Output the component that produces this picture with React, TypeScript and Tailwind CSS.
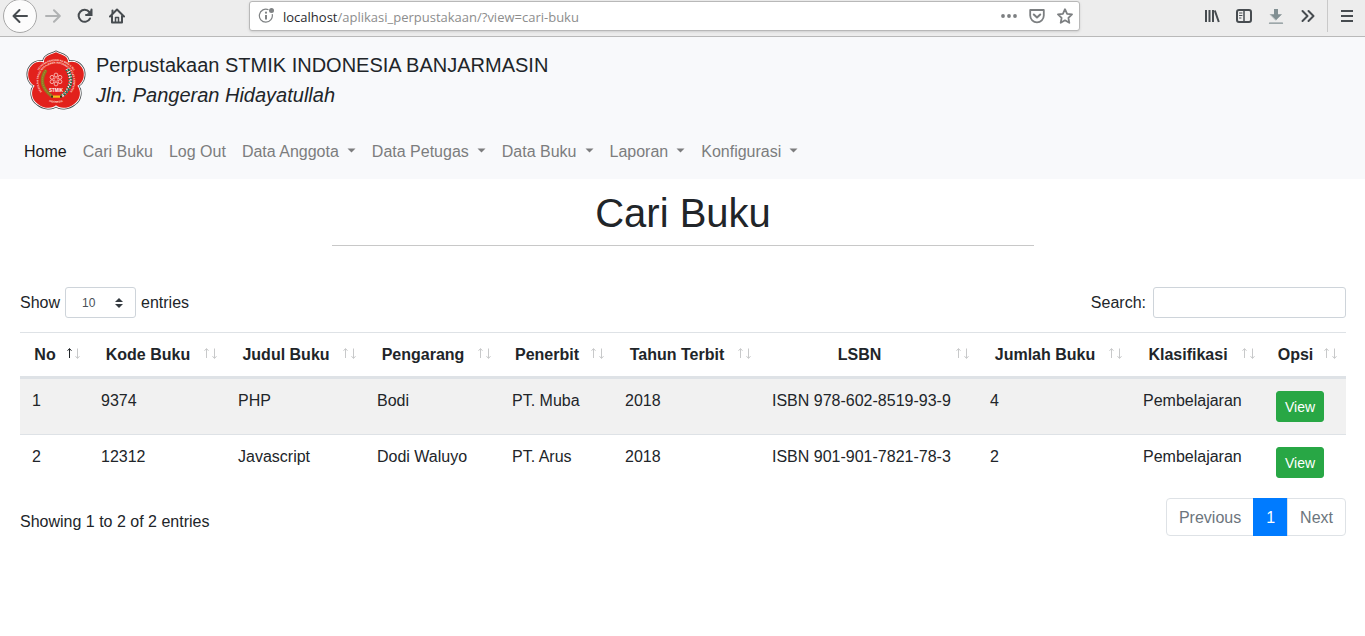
import React from 'react';

type SortState = 'asc' | 'none';

interface Column {
  title: string;
  width: string;
  sort: SortState;
}

interface Book {
  no: number;
  kode: string;
  judul: string;
  pengarang: string;
  penerbit: string;
  tahun: string;
  isbn: string;
  jumlah: number;
  klasifikasi: string;
}

const columns: Column[] = [
  { title: 'No', width: 'w-[69px]', sort: 'asc' },
  { title: 'Kode Buku', width: 'w-[137px]', sort: 'none' },
  { title: 'Judul Buku', width: 'w-[139px]', sort: 'none' },
  { title: 'Pengarang', width: 'w-[135px]', sort: 'none' },
  { title: 'Penerbit', width: 'w-[113px]', sort: 'none' },
  { title: 'Tahun Terbit', width: 'w-[147px]', sort: 'none' },
  { title: 'LSBN', width: 'w-[218px]', sort: 'none' },
  { title: 'Jumlah Buku', width: 'w-[153px]', sort: 'none' },
  { title: 'Klasifikasi', width: 'w-[133px]', sort: 'none' },
  { title: 'Opsi', width: 'w-[82px]', sort: 'none' },
];

const books: Book[] = [
  { no: 1, kode: '9374', judul: 'PHP', pengarang: 'Bodi', penerbit: 'PT. Muba', tahun: '2018', isbn: 'ISBN 978-602-8519-93-9', jumlah: 4, klasifikasi: 'Pembelajaran' },
  { no: 2, kode: '12312', judul: 'Javascript', pengarang: 'Dodi Waluyo', penerbit: 'PT. Arus', tahun: '2018', isbn: 'ISBN 901-901-7821-78-3', jumlah: 2, klasifikasi: 'Pembelajaran' },
];

const navItems = [
  { label: 'Home', active: true, menu: false },
  { label: 'Cari Buku', active: false, menu: false },
  { label: 'Log Out', active: false, menu: false },
  { label: 'Data Anggota', active: false, menu: true },
  { label: 'Data Petugas', active: false, menu: true },
  { label: 'Data Buku', active: false, menu: true },
  { label: 'Laporan', active: false, menu: true },
  { label: 'Konfigurasi', active: false, menu: true },
];

function ToolButton({ label, children, disabled = false }: { label: string; children: React.ReactNode; disabled?: boolean }) {
  return (
    <button
      type="button"
      aria-label={label}
      disabled={disabled}
      className="flex h-8 w-8 shrink-0 items-center justify-center text-[#474c50] disabled:text-[#b0b2b3]"
    >
      <svg viewBox="0 0 16 16" className="h-4 w-4" fill="none" stroke="currentColor" strokeWidth="2" strokeLinecap="round" strokeLinejoin="round" aria-hidden="true">
        {children}
      </svg>
    </button>
  );
}

function BrowserBar() {
  return (
    <div className="flex h-[37px] items-start overflow-hidden border-b border-[#b9b9b9] bg-[#ededed]">
      <button
        type="button"
        aria-label="Back"
        className="-mt-px ml-[3px] flex h-[34px] w-[34px] shrink-0 items-center justify-center rounded-full border border-[#a8a8a8] bg-[#fcfcfc] text-[#474c50]"
      >
        <svg viewBox="0 0 16 16" className="h-4 w-4" fill="none" stroke="currentColor" strokeWidth="2" strokeLinecap="round" strokeLinejoin="round" aria-hidden="true">
          <path d="M15 8H1.5M7.5 2l-6 6 6 6" />
        </svg>
      </button>
      <ToolButton label="Forward" disabled>
        <path d="M1 8h13.500M9 2.200L14.800 8 9 13.800" />
      </ToolButton>
      <ToolButton label="Reload">
        <path d="M13 10.500A6 6 0 1 1 12.300 4" />
        <path d="M14.500 1.500v5.500H9" strokeLinejoin="miter" />
        <path d="M14.500 2v5H9.500z" fill="currentColor" strokeWidth="0.500" />
      </ToolButton>
      <ToolButton label="Home">
        <path d="M1 8.500L8 1.500l7 7" />
        <path d="M3 8v6.500h10V8" />
        <path d="M3.500 2.500v3" />
        <path d="M6.500 14V9.500h3V14" strokeWidth="1.500" />
      </ToolButton>

      <div className="mx-[116px] mt-px flex h-[30px] min-w-0 flex-1 items-center rounded-[3px] border border-[#b8b8b8] bg-white pr-1.5 pl-2 shadow-sm">
        <svg viewBox="0 0 18 16" className="h-4 w-[18px] shrink-0" fill="none" stroke="#7f8284" aria-hidden="true">
          <path d="M10.500 1.700A6.500 6.500 0 1 0 14.200 6.200" strokeWidth="1.200" />
          <path d="M8 7v4.500" strokeWidth="2" />
          <circle cx="8" cy="4.700" r="1.100" fill="#7f8284" stroke="none" />
          <circle cx="13.500" cy="2.500" r="2.500" fill="#7f8284" stroke="none" />
        </svg>
        <p className="ml-[7px] min-w-0 flex-1 truncate pt-px font-['Open_Sans',sans-serif] text-[13px] leading-5 text-[#8d8d8d]">
          <span className="text-[#2a2a2e]">localhost</span>/aplikasi_perpustakaan/?view=cari-buku
        </p>
        <div className="flex items-center gap-3 text-[#7c7f81]">
          <button type="button" aria-label="Page actions">
            <svg viewBox="0 0 16 16" className="h-4 w-4" fill="currentColor" aria-hidden="true">
              <circle cx="2" cy="8" r="1.900" />
              <circle cx="8" cy="8" r="1.900" />
              <circle cx="14" cy="8" r="1.900" />
            </svg>
          </button>
          <button type="button" aria-label="Save to Pocket">
            <svg viewBox="0 0 16 16" className="h-4 w-4" fill="none" stroke="currentColor" strokeWidth="2" strokeLinecap="round" strokeLinejoin="round" aria-hidden="true">
              <path d="M1.200 2h13.600v5.500a6.800 6.800 0 0 1-13.600 0z" strokeWidth="1.800" />
              <path d="M4.800 6.500L8 9.500l3.200-3" />
            </svg>
          </button>
          <button type="button" aria-label="Bookmark this page">
            <svg viewBox="0 0 16 16" className="h-4 w-4" fill="none" stroke="currentColor" strokeWidth="1.800" strokeLinejoin="round" aria-hidden="true">
              <path d="M8 1.200l2.100 4.600 4.900.600-3.600 3.400.9 5L8 12.300l-4.300 2.500.9-5L1 6.400l4.900-.6z" />
            </svg>
          </button>
        </div>
      </div>

      <ToolButton label="Library">
        <path d="M2 2v12M5.500 2v12M9 2v12M10.800 2.500l4 11.500" strokeLinecap="butt" />
      </ToolButton>
      <ToolButton label="Sidebars">
        <rect x="1" y="2" width="14" height="12" rx="2" />
        <path d="M8 2v12" strokeWidth="1.500" />
        <path d="M3.500 5h2.500M3.500 7.500h2.500M3.500 10h1.500" strokeWidth="1" />
      </ToolButton>
      <ToolButton label="Downloads">
        <g stroke="#829093">
          <path d="M8 1v6" strokeWidth="4" strokeLinecap="butt" />
          <path d="M2.500 6.500h11L8 12z" fill="#829093" strokeWidth="0.500" />
          <path d="M1.500 15.200h13" strokeWidth="1.200" />
        </g>
      </ToolButton>
      <ToolButton label="More tools">
        <path d="M2.500 3l5 5-5 5M8.500 3l5 5-5 5" />
      </ToolButton>
      <div className="ml-[3px] h-8 w-px shrink-0 bg-[#c9c9c9]" />
      <div className="mr-0.5 ml-[3px]">
        <ToolButton label="Open menu">
          <path d="M2 3h12M2 8h12M2 13h12" strokeLinecap="butt" />
        </ToolButton>
      </div>
    </div>
  );
}

const flower =
  'M30 .5C34 3 43.500 3.500 43 11.500C49 9 57 12.500 59.500 20.500C61 27 58.500 33.500 53 36.500C57.500 42 56.500 51.500 49.500 56C43.500 61 34 61.500 30 57.500C26 61.500 16.500 61 10.500 56C3.500 51.500 2.500 42 7 36.500C1.500 33.500 -1 27 .5 20.500C3 12.500 11 9 17 11.500C16.500 3.500 26 3 30 .5Z';

const rings = [
  [30, 25],
  [34, 27.3],
  [34, 31.7],
  [30, 34],
  [26, 31.7],
  [26, 27.3],
];

function Logo() {
  return (
    <svg viewBox="0 0 60 60" className="h-[60px] w-[60px] shrink-0" role="img" aria-label="STMIK Indonesia">
      <defs>
        <path id="ring-top" d="M9.500 36a20.900 20.900 0 1 1 41 0" />
        <path id="ring-inner" d="M17.500 43.500a17.600 17.600 0 1 1 25 0" />
        <path id="ring-bottom" d="M12 43a21.500 21.500 0 0 0 36 0" />
      </defs>
      <g transform="translate(30 30) scale(.93) translate(-30 -30.300)" strokeLinejoin="round">
        <path d={flower} fill="#45484a" stroke="#45484a" strokeWidth="3.600" />
        <path d={flower} fill="#ffffff" stroke="#ffffff" strokeWidth="2" />
        <path d={flower} fill="#e2211c" />
      </g>
      <g fill="#ffe4df" fontFamily="Liberation Sans, sans-serif" fontWeight="700" fontSize="2.500" textAnchor="middle" aria-hidden="true">
        <text><textPath href="#ring-top" startOffset="50%">YAYASAN PENDIDIKAN BINA ILMU</textPath></text>
        <text><textPath href="#ring-inner" startOffset="50%">SEKOLAH TINGGI MANAJEMEN INFORMATIKA DAN KOMPUTER</textPath></text>
        <text><textPath href="#ring-bottom" startOffset="50%">INDONESIA</textPath></text>
        <text x="30" y="41.500" fontSize="4.500" fill="#ffffff">STMIK</text>
      </g>
      <g fill="none">
        <path d="M20 20Q10.500 34 25.500 46" stroke="#8d7a22" strokeWidth="3.200" />
        <path d="M20 20Q10.500 34 25.500 46" stroke="#b09b3a" strokeWidth="1" strokeDasharray="1 1" />
        <path d="M41 19Q50 34 36 46" stroke="#ffffff" strokeWidth="3.200" strokeDasharray="1.600 1" />
        <path d="M42 19Q51 34 37 46" stroke="#16724f" strokeWidth="2" strokeDasharray="2 1" />
        <path d="M40 20Q48 34 35.500 45" stroke="#16724f" strokeWidth="1.400" strokeDasharray="1.400 1.600" />
        {rings.map(([x, y]) => <circle key={`${x}-${y}`} cx={x} cy={y} r="1.900" stroke="#ffe4df" strokeWidth="0.700" />)}
        <circle cx="30" cy="29.500" r="1.800" stroke="#ffe4df" strokeWidth="0.500" />
      </g>
      <path d="M25 45.500h11v2.200H25z" fill="#f0c419" />
      <path d="M25 45.500h2v2.200h-2zM34 45.500h2v2.200h-2z" fill="#3a3320" />
    </svg>
  );
}

function SiteHeader() {
  return (
    <header className="bg-[#f8f9fb] px-4 pt-[13px] pb-[7px]">
      <a href="#home" className="flex items-start gap-2.5 pl-2.5 text-xl leading-[30px] text-[#212529]">
        <Logo />
        <span>
          Perpustakaan STMIK INDONESIA BANJARMASIN
          <br />
          <em>Jln. Pangeran Hidayatullah</em>
        </span>
      </a>
      <nav className="mt-[22px] flex flex-wrap">
        {navItems.map((item) => (
          <a
            key={item.label}
            href="#menu"
            className={`flex items-center gap-2 px-2 py-2 text-base leading-6 ${item.active ? 'text-[#19191a]' : 'text-[#7c7d7e]'}`}
          >
            {item.label}
            {item.menu && (
              <svg viewBox="0 0 9 5" className="-mt-1 h-[5px] w-[9px]" fill="currentColor" aria-hidden="true">
                <path d="M.5 .5h8L4.500 4.500z" />
              </svg>
            )}
          </a>
        ))}
      </nav>
    </header>
  );
}

function SortArrows({ state }: { state: SortState }) {
  return (
    <span className="absolute right-2 bottom-4 flex text-[#c8c9ca]" aria-hidden="true">
      <svg viewBox="0 0 8 14" className={`h-3.5 w-2 ${state === 'asc' ? 'text-[#212529]' : ''}`} fill="none" stroke="currentColor">
        <path d="M4.500 12V3" />
        <path d="M2.500 4.800L4.500 2.500l2 2.300" />
      </svg>
      <svg viewBox="0 0 8 14" className="h-3.5 w-2" fill="none" stroke="currentColor">
        <path d="M4.500 2.500V12" />
        <path d="M2.500 10.200l2 2.300 2-2.300" />
      </svg>
    </span>
  );
}

function BookTable() {
  return (
    <table className="mt-3.5 w-full table-fixed border-separate border-spacing-0 leading-[19px]">
      <thead>
        <tr>
          {columns.map((c) => (
            <th
              key={c.title}
              scope="col"
              aria-sort={c.sort === 'asc' ? 'ascending' : 'none'}
              className={`relative border-t border-b-2 border-[#dee2e6] py-3 pr-[31px] pl-3 text-center font-bold whitespace-nowrap ${c.width}`}
            >
              {c.title}
              <SortArrows state={c.sort} />
            </th>
          ))}
        </tr>
      </thead>
      <tbody>
        {books.map((b) => (
          <tr key={b.no} className="odd:bg-[#f1f1f1] [&>td]:border-t [&>td]:border-[#dee2e6] [&>td]:p-3 [&>td]:align-top [&>td]:whitespace-nowrap">
            <td>{b.no}</td>
            <td>{b.kode}</td>
            <td>{b.judul}</td>
            <td>{b.pengarang}</td>
            <td>{b.penerbit}</td>
            <td>{b.tahun}</td>
            <td>{b.isbn}</td>
            <td>{b.jumlah}</td>
            <td>{b.klasifikasi}</td>
            <td>
              <button type="button" className="block rounded-[3px] border border-[#28a745] bg-[#28a745] px-2 pt-[5px] pb-[3px] text-sm leading-[21px] text-white">
                View
              </button>
            </td>
          </tr>
        ))}
      </tbody>
    </table>
  );
}

export default function App() {
  return (
    <div className="min-h-screen bg-white font-['Liberation_Sans',Arial,sans-serif] text-base text-[#212529]">
      <BrowserBar />
      <SiteHeader />
      <main className="pt-2.5 pr-[19px] pl-5">
        <div className="mx-auto w-[53%] border-b border-[#c8c8c8] pb-2">
          <h1 className="text-center text-[40px] leading-[48px]">Cari Buku</h1>
        </div>

        <div className="mt-[41px] flex items-center justify-between">
          <label className="flex items-center gap-[5px]">
            Show
            <span className="relative">
              <select defaultValue="10" className="block h-[31px] w-[71px] appearance-none rounded-[3px] border border-[#ced4da] bg-white px-4 text-xs text-[#495057]">
                <option>10</option>
                <option>25</option>
                <option>50</option>
                <option>100</option>
              </select>
              <svg viewBox="0 0 8 10" className="pointer-events-none absolute top-[11px] right-[13px] h-2.5 w-2" fill="#343a40" aria-hidden="true">
                <path d="M4 0l4 4H0zM0 6h8l-4 4z" />
              </svg>
            </span>
            entries
          </label>
          <label className="flex items-center gap-[7px]">
            Search:
            <input type="search" className="h-[31px] w-[193px] rounded-[3px] border border-[#ced4da] bg-white px-2 text-sm" />
          </label>
        </div>

        <BookTable />

        <div className="mt-2 flex items-start justify-between">
          <p className="pt-3 leading-6">Showing 1 to 2 of 2 entries</p>
          <nav aria-label="Pagination" className="flex leading-5 text-[#6c757d]">
            <button type="button" disabled className="rounded-l border border-[#dee2e6] bg-white px-3 pt-[9px] pb-[7px]">Previous</button>
            <button type="button" aria-current="page" className="-ml-px border border-[#007bff] bg-[#007bff] px-3 pt-[9px] pb-[7px] text-white">1</button>
            <button type="button" disabled className="-ml-px rounded-r border border-[#dee2e6] bg-white px-3 pt-[9px] pb-[7px]">Next</button>
          </nav>
        </div>
      </main>
    </div>
  );
}
